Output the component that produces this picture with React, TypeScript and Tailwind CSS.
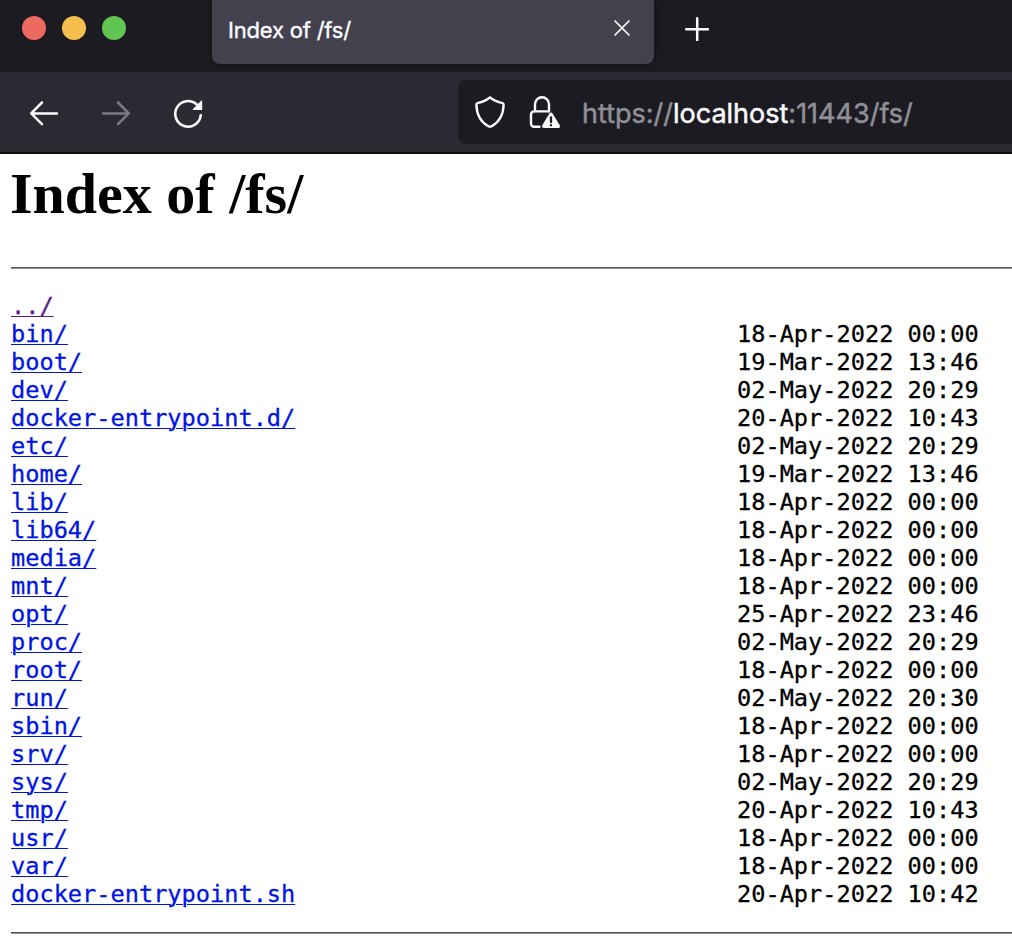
const entries: [string, string][] = [
  ['../', ''],
  ['bin/', '18-Apr-2022 00:00'],
  ['boot/', '19-Mar-2022 13:46'],
  ['dev/', '02-May-2022 20:29'],
  ['docker-entrypoint.d/', '20-Apr-2022 10:43'],
  ['etc/', '02-May-2022 20:29'],
  ['home/', '19-Mar-2022 13:46'],
  ['lib/', '18-Apr-2022 00:00'],
  ['lib64/', '18-Apr-2022 00:00'],
  ['media/', '18-Apr-2022 00:00'],
  ['mnt/', '18-Apr-2022 00:00'],
  ['opt/', '25-Apr-2022 23:46'],
  ['proc/', '02-May-2022 20:29'],
  ['root/', '18-Apr-2022 00:00'],
  ['run/', '02-May-2022 20:30'],
  ['sbin/', '18-Apr-2022 00:00'],
  ['srv/', '18-Apr-2022 00:00'],
  ['sys/', '02-May-2022 20:29'],
  ['tmp/', '20-Apr-2022 10:43'],
  ['usr/', '18-Apr-2022 00:00'],
  ['var/', '18-Apr-2022 00:00'],
  ['docker-entrypoint.sh', '20-Apr-2022 10:42'],
];

function TabStrip() {
  return (
    <div className="flex h-[72px] items-start bg-[#1c1b22]">
      <div className="flex w-[212px] gap-4 pt-4 pl-[22px]">
        <span className="size-6 rounded-full bg-[#ed6a5e]" />
        <span className="size-6 rounded-full bg-[#f5bf4f]" />
        <span className="size-6 rounded-full bg-[#61c554]" />
      </div>
      <div className="flex h-16 w-[442px] justify-between rounded-b-lg bg-[#42414d] pr-6 pl-4 shadow-[0_0_8px_rgba(0,0,0,0.4)]">
        <span className="pt-4 text-[22px] leading-7 tracking-[-0.2px] text-[#fbfbfe] [-webkit-text-stroke:0.4px]">Index of /fs/</span>
        <svg className="mt-5 size-4" viewBox="0 0 16 16" fill="none" stroke="#fbfbfe" strokeWidth="1.7" strokeLinecap="round">
          <path d="M1 1l14 14M15 1L1 15" />
        </svg>
      </div>
      <svg className="mt-[17px] ml-[31px] size-6" viewBox="0 0 24 24" fill="none" stroke="#fbfbfe" strokeWidth="2.5" strokeLinecap="round">
        <path d="M12.2 1.2v22M1.2 12.2h22" />
      </svg>
    </div>
  );
}

function Toolbar() {
  return (
    <div className="flex h-[82px] items-start border-b-2 border-[#0c0c0d] bg-[#2b2a33]">
      <div className="flex w-[458px] gap-10 pt-[25px] pl-7">
        <svg className="size-8" viewBox="0 0 32 32" fill="none" stroke="#fbfbfe" strokeWidth="2.5" strokeLinecap="round" strokeLinejoin="round">
          <path d="M29 16.4H3.5M14 5.5L3.2 16.4 14 27.2" />
        </svg>
        <svg className="size-8" viewBox="0 0 32 32" fill="none" stroke="#7c7b82" strokeWidth="2.5" strokeLinecap="round" strokeLinejoin="round">
          <path d="M3 16.4h25.5M18 5.5l10.8 10.9L18 27.2" />
        </svg>
        <svg className="size-8" viewBox="0 0 32 32" fill="none" stroke="#fbfbfe" strokeWidth="2.6" strokeLinecap="round">
          <path d="M28.8 18.2A12.8 12.8 0 1 1 24.6 7.3" />
          <path d="M29.6 4.2v8.2h-8.2z" fill="#fbfbfe" strokeWidth="1.2" strokeLinejoin="round" />
        </svg>
      </div>
      <div className="mt-2 flex h-16 flex-1 rounded-l-lg bg-[#1c1b22]">
        <svg className="mt-4 ml-4 size-8" viewBox="0 0 32 32" fill="none" stroke="#fbfbfe" strokeWidth="2.4" strokeLinejoin="round">
          <path d="M16 1.3C12.5 4.2 7.5 6.2 3.4 7.2Q2.4 7.5 2.4 8.7C2.7 19 6.5 26 14.5 30.2Q16 31 17.5 30.2C25.5 26 29.3 19 29.6 8.7Q29.6 7.5 28.6 7.2C24.5 6.2 19.5 4.2 16 1.3z" />
        </svg>
        <svg className="mt-4 ml-[22px] size-8" viewBox="0 0 32 32" fill="none" stroke="#fbfbfe" strokeWidth="2.4" strokeLinecap="round">
          <path d="M7 15.5V8.3a7 7 0 0 1 14 0v7.2M11.5 30.7H6a3 3 0 0 1-3-3v-9.3a3 3 0 0 1 3-3h14.5" />
          <path d="M23 18.2L30.3 30.2H15.7z" fill="#fbfbfe" strokeWidth="3.4" strokeLinejoin="round" />
          <path d="M23 21.4v4.6M23 29.2v.1" stroke="#1c1b22" strokeWidth="2.3" />
        </svg>
        <div className="ml-[22px] pt-[17px] text-[27px] leading-[34px] text-[#8f8f96] [-webkit-text-stroke:0.5px]">
          https://<span className="text-[#fbfbfe]">localhost</span>:11443/fs/
        </div>
      </div>
    </div>
  );
}

export default function App() {
  return (
    <div className="flex h-[942px] flex-col overflow-hidden bg-white font-['Inter','Liberation_Sans',sans-serif]">
      <TabStrip />
      <Toolbar />
      <main className="flex flex-col pl-[11px] text-black">
        <h1 className="mt-2 -ml-px h-[105px] font-['Liberation_Serif',serif] text-[58px] leading-[64px] font-bold">Index of /fs/</h1>
        <hr className="h-0.5 border-t border-b border-t-[#555555] border-b-[#909090]" />
        <div className="mt-[23px] mb-6 font-['DejaVu_Sans_Mono',monospace] text-[23.62px] leading-7 [-webkit-text-stroke:0.3px]">
          {entries.map(([name, date]) => (
            <div key={name} className="flex h-7">
              <div className="w-[726px]">
                <a
                  href="#"
                  className={
                    name === '../'
                      ? 'text-[#551a8b] underline decoration-[#551a8b] decoration-1 underline-offset-2'
                      : 'text-[#0014e6] underline decoration-[#0014e6] decoration-1 underline-offset-2'
                  }
                >
                  {name}
                </a>
              </div>
              <span className="whitespace-pre">{date}</span>
            </div>
          ))}
        </div>
        <hr className="h-0.5 border-t border-b border-t-[#555555] border-b-[#909090]" />
      </main>
    </div>
  );
}
